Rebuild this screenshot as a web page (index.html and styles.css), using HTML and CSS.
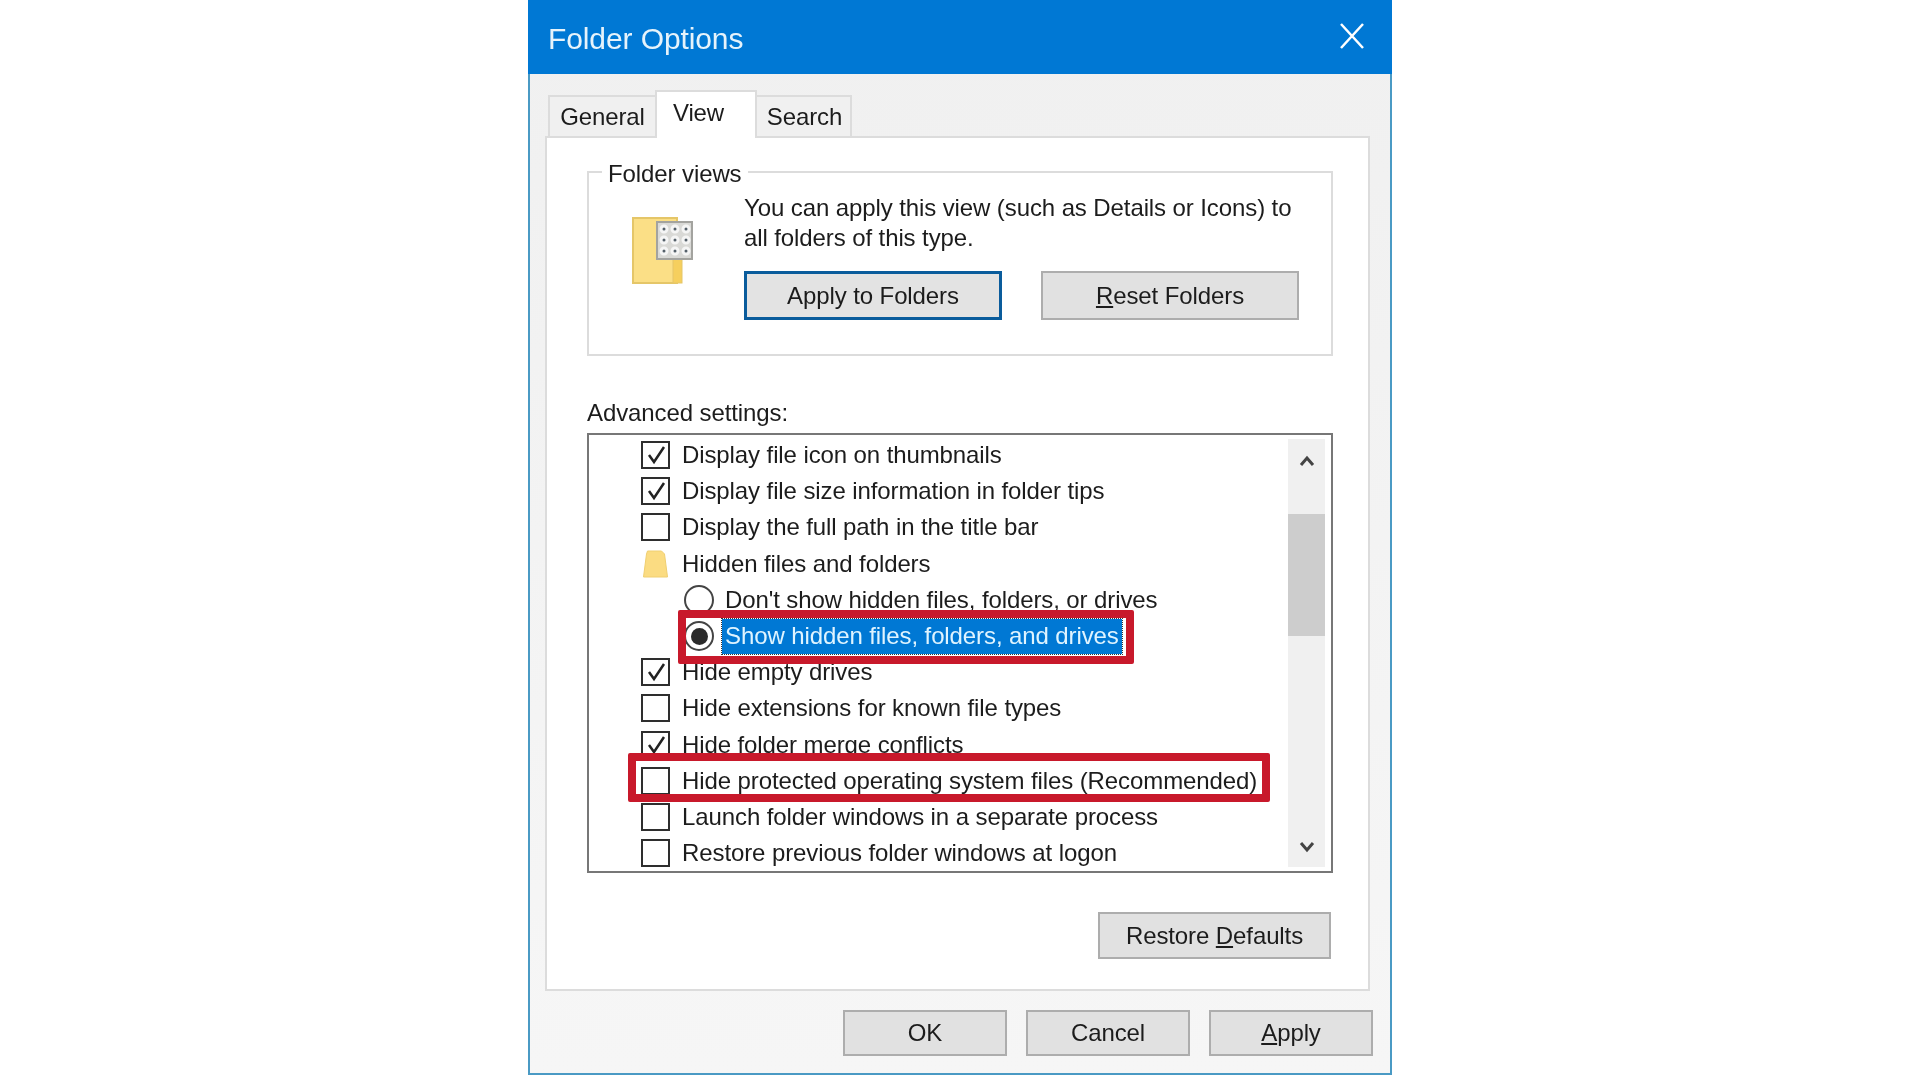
FILE: index.html
```html
<!DOCTYPE html>
<html lang="en">
  <head>
    <meta charset="UTF-8" />
    <title>Folder Options</title>
    <link rel="stylesheet" href="styles.css">
  </head>
  <body>
    <div class="dialog">
      <div class="titlebar">
        <span class="title">Folder Options</span>
        <svg class="close" width="24" height="26" viewBox="0 0 24 26"><path d="M1 1 L23 25 M23 1 L1 25" /></svg>
      </div>

      <div class="tabs">
        <div class="tab tab-general">General</div>
        <div class="tab tab-active">View</div>
        <div class="tab tab-search">Search</div>
      </div>

      <div class="panel">
        <fieldset class="group">
          <legend>Folder views</legend>
          <div class="group-body">
            <div class="group-icon">
              <svg width="62" height="68" viewBox="0 0 62 68">
                <rect x="1" y="1" width="44" height="65" fill="#fbdf86" stroke="#e5c668" stroke-width="2" />
                <rect x="41" y="40" width="9" height="26" fill="#f6cf5e" stroke="#e5c668" stroke-width="1" />
                <rect x="25" y="5" width="35" height="37" fill="#d9d9d6" stroke="#a3a39f" stroke-width="2" />
                <g fill="#55606a" stroke="#f5f5f5" stroke-width="3">
                  <circle cx="32" cy="12" r="3" /><circle cx="43" cy="12" r="3" /><circle cx="54" cy="12" r="3" />
                  <circle cx="32" cy="23" r="3" /><circle cx="43" cy="23" r="3" /><circle cx="54" cy="23" r="3" />
                  <circle cx="32" cy="34" r="3" /><circle cx="43" cy="34" r="3" /><circle cx="54" cy="34" r="3" />
                </g>
              </svg>
            </div>
            <div class="group-text">
              <p>You can apply this view (such as Details or Icons) to all folders of this type.</p>
              <div class="group-buttons">
                <button class="btn btn-focus">Apply to Folders</button>
                <button class="btn"><u>R</u>eset Folders</button>
              </div>
            </div>
          </div>
        </fieldset>

        <div class="list-label">Advanced settings:</div>

        <div class="list">
          <div class="rows">
            <div class="row"><span class="check on"><svg width="24" height="24" viewBox="0 0 24 24"><path d="M5 12 L10 19 L20 4" /></svg></span>Display file icon on thumbnails</div>
            <div class="row"><span class="check on"><svg width="24" height="24" viewBox="0 0 24 24"><path d="M5 12 L10 19 L20 4" /></svg></span>Display file size information in folder tips</div>
            <div class="row"><span class="check"></span>Display the full path in the title bar</div>
            <div class="row">
              <svg class="mini-folder" width="28" height="28" viewBox="0 0 28 28"><path d="M6 1 H20 L23 4 L26 27 H2 L5 4 Z" fill="#fbdc82" stroke="#f0cf70" /></svg>
              Hidden files and folders
            </div>
            <div class="row row-radio"><span class="radio"></span>Don't show hidden files, folders, or drives</div>
            <div class="row row-radio"><span class="radio on"></span><span class="selected">Show hidden files, folders, and drives</span></div>
            <div class="row"><span class="check on"><svg width="24" height="24" viewBox="0 0 24 24"><path d="M5 12 L10 19 L20 4" /></svg></span>Hide empty drives</div>
            <div class="row"><span class="check"></span>Hide extensions for known file types</div>
            <div class="row"><span class="check on"><svg width="24" height="24" viewBox="0 0 24 24"><path d="M5 12 L10 19 L20 4" /></svg></span>Hide folder merge conflicts</div>
            <div class="row"><span class="check"></span>Hide protected operating system files (Recommended)</div>
            <div class="row"><span class="check"></span>Launch folder windows in a separate process</div>
            <div class="row"><span class="check"></span>Restore previous folder windows at logon</div>
          </div>
          <div class="scrollbar">
            <div class="arrow"><svg width="16" height="12" viewBox="0 0 16 12"><path d="M2 10 L8 3 L14 10" /></svg></div>
            <div class="thumb"></div>
            <div class="arrow arrow-down"><svg width="16" height="12" viewBox="0 0 16 12"><path d="M2 2 L8 9 L14 2" /></svg></div>
          </div>
          <div class="mark mark-show"></div>
          <div class="mark mark-protected"></div>
        </div>

        <div class="restore-line">
          <button class="btn btn-restore">Restore <u>D</u>efaults</button>
        </div>
      </div>

      <div class="footer">
        <button class="btn btn-footer">OK</button>
        <button class="btn btn-footer">Cancel</button>
        <button class="btn btn-footer"><u>A</u>pply</button>
      </div>
    </div>
  </body>
</html>
```

FILE: styles.css
```css
body {
  font-family: "Liberation Sans", Arial, sans-serif;
  font-size: 24px;
  letter-spacing: -0.1px;
  color: #1c1c1c;
  background: #ffffff;
  margin: 0;
  display: flex;
  justify-content: center;
}

.dialog {
  width: 864px;
  height: 1075px;
  box-sizing: border-box;
  display: flex;
  flex-direction: column;
  background: linear-gradient(#f0f0f0, #f6f6f6);
  border: 2px solid #4a9ac4;
  border-top: none;
  filter: blur(0.6px);
}

.titlebar {
  box-sizing: border-box;
  height: 74px;
  margin: 0 -2px;
  padding: 3px 28px 0 20px;
  display: flex;
  align-items: center;
  justify-content: space-between;
  background: #0078d4;
  color: #e6f3fb;
  flex-shrink: 0;
}

.title {
  font-size: 30px;
}

.close {
  margin-bottom: 6px;
}

.close path {
  fill: none;
  stroke: #ffffff;
  stroke-width: 2.5;
}

.tabs {
  display: flex;
  align-items: flex-end;
  margin: 16px 0 0 18px;
  height: 46px;
  position: relative;
  z-index: 1;
}

.tab {
  box-sizing: border-box;
  height: 41px;
  padding-top: 6px;
  border: 2px solid #dcdcdc;
  border-bottom: none;
  text-align: center;
  background: #f0f0f0;
}

.tab-general {
  width: 107px;
  border-right: none;
}

.tab-active {
  width: 102px;
  height: 48px;
  margin-bottom: -2px;
  padding: 7px 15px 0 0;
  background: #ffffff;
}

.tab-search {
  width: 95px;
  padding-left: 2px;
  border-left: none;
}

.panel {
  margin: 0 20px 0 15px;
  padding: 17px 35px 30px 40px;
  border: 2px solid #dcdcdc;
  background: #ffffff;
}

.group {
  margin: 0;
  padding: 4px 0 34px;
  border: 2px solid #dcdcdc;
}

.group legend {
  margin-left: 13px;
  padding: 4px 6px 0;
  line-height: 30px;
}

.group-body {
  display: flex;
}

.group-icon {
  width: 155px;
  padding: 24px 0 0 43px;
  box-sizing: border-box;
  flex-shrink: 0;
}

.group-text {
  width: 558px;
}

.group-text p {
  margin: 0 0 18px;
  line-height: 30px;
}

.group-buttons {
  display: flex;
  gap: 39px;
}

.btn {
  font: inherit;
  color: inherit;
  letter-spacing: inherit;
  box-sizing: border-box;
  background: #e1e1e1;
  border: 2px solid #adadad;
  padding: 0;
}

.group-buttons .btn {
  width: 258px;
  height: 49px;
}

.btn-focus {
  border: 3px solid #0a5c9c;
  background: #e3e3e3;
}

.list-label {
  margin: 42px 0 5px;
  line-height: 30px;
}

.list {
  position: relative;
  height: 440px;
  box-sizing: border-box;
  padding: 2px 5px 0 0;
  border: 2px solid #777;
  display: flex;
  overflow: hidden;
}

.rows {
  flex: 1;
}

.row {
  height: 36.2px;
  display: flex;
  align-items: center;
  padding-left: 52px;
  white-space: nowrap;
}

.row-radio {
  padding-left: 95px;
}

.check {
  box-sizing: border-box;
  width: 29px;
  height: 28px;
  margin-right: 12px;
  border: 2px solid #2e2e2e;
  display: flex;
  align-items: center;
  justify-content: center;
}

.check path {
  fill: none;
  stroke: #222;
  stroke-width: 2.5;
}

.mini-folder {
  width: 29px;
  margin-right: 12px;
}

.radio {
  box-sizing: border-box;
  width: 30px;
  height: 30px;
  margin-right: 11px;
  border: 2px solid #444;
  border-radius: 50%;
  display: flex;
  align-items: center;
  justify-content: center;
}

.radio.on::before {
  content: "";
  width: 17px;
  height: 17px;
  border-radius: 50%;
  background: #2b2b2b;
}

.row-radio .radio.on {
  margin-right: 8px;
}

.selected {
  height: 35px;
  line-height: 33px;
  padding: 0 3px;
  box-sizing: border-box;
  background: #0078d4;
  color: #dff4ff;
  outline: 1px dotted #333;
}

.scrollbar {
  width: 37px;
  margin: 2px 1px 0 -1px;
  height: 428px;
  background: #f0f0f0;
  display: flex;
  flex-direction: column;
  flex-shrink: 0;
}

.arrow {
  height: 75px;
  display: flex;
  align-items: flex-start;
  justify-content: center;
  padding-top: 16px;
  box-sizing: border-box;
}

.arrow-down {
  margin-top: auto;
  height: 26px;
  padding-top: 0;
}

.arrow path {
  fill: none;
  stroke: #444;
  stroke-width: 3;
}

.thumb {
  height: 122px;
  background: #cdcdcd;
}

/* red highlight boxes drawn over the list */
.mark {
  position: absolute;
  box-sizing: border-box;
  border: 8px solid #c8192b;
  border-radius: 2px;
}

.mark-show {
  left: 89px;
  top: 175px;
  width: 456px;
  height: 54px;
}

.mark-protected {
  left: 39px;
  top: 318px;
  width: 642px;
  height: 49px;
}

.restore-line {
  display: flex;
  justify-content: flex-end;
  margin: 39px 2px 0 0;
}

.btn-restore {
  width: 233px;
  height: 47px;
}

.footer {
  display: flex;
  justify-content: flex-end;
  gap: 19px;
  margin: 19px 17px 0 0;
}

.btn-footer {
  width: 164px;
  height: 46px;
}
```
